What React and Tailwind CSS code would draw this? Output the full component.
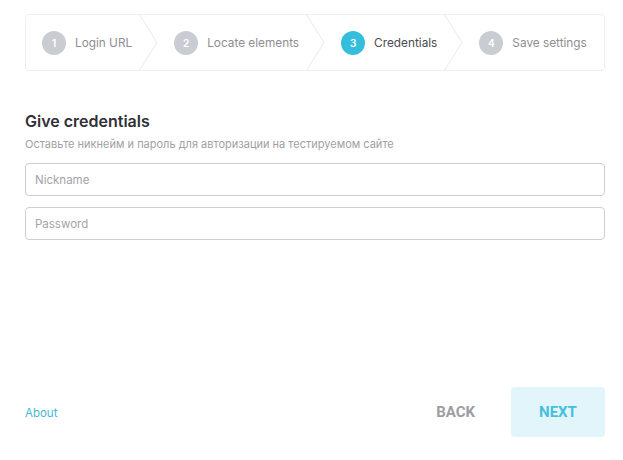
import React, { useState } from "react";

const steps = [
  { n: 1, label: "Login URL" },
  { n: 2, label: "Locate elements" },
  { n: 3, label: "Credentials", active: true },
  { n: 4, label: "Save settings", last: true },
];

const Chevron = () => (
  <svg width="19" height="57" viewBox="0 0 19 57" className="shrink-0 ml-[7px]">
    <polyline points="0,0 18,28.5 0,57" fill="none" stroke="#e9e9ec" strokeWidth="1" />
  </svg>
);

const App = () => {
  const [creds, setCreds] = useState({ nickname: "", password: "" });

  return (
    <div
      className="h-[460px] w-full flex flex-col bg-white pl-[25px] pr-[18px]"
      style={{ fontFamily: "Inter, 'Noto Sans', sans-serif" }}
    >
      {/* Stepper */}
      <div className="mt-[14px] h-[57px] flex items-center border border-[#efeff1] rounded-[4px] overflow-hidden">
        {steps.map((s) => (
          <div key={s.n} className="flex items-center h-full pl-[16px]">
            <span
              className={
                "mt-[1px] w-[24px] h-[24px] rounded-full flex items-center justify-center text-[10px] font-semibold text-white " +
                (s.active ? "bg-[#35bedc]" : "bg-[#c9ccd2]")
              }
            >
              {s.n}
            </span>
            <span
              className={
                "mt-[2px] ml-[9px] text-[11.8px] whitespace-nowrap " +
                (s.active ? "text-[#4a4a4f]" : "text-[#8e8e93]")
              }
            >
              {s.label}
            </span>
            {!s.last && <Chevron />}
          </div>
        ))}
      </div>

      {/* Form */}
      <h2 className="mt-[40px] text-[16px] leading-[20px] font-semibold text-[#303036]">
        Give credentials
      </h2>
      <p className="mt-[5px] text-[11px] leading-[16px] text-[#a0a0a6]">
        Оставьте никнейм и пароль для авторизации на тестируемом сайте
      </p>
      <input
        type="text"
        placeholder="Nickname"
        value={creds.nickname}
        onChange={(e) => setCreds({ ...creds, nickname: e.target.value })}
        className="mt-[11px] h-[33px] w-full border border-[#cfcfd3] rounded-[4px] px-[9px] text-[11.5px] text-[#333] placeholder:text-[#a3a3a8] focus:outline-none"
      />
      <input
        type="password"
        placeholder="Password"
        value={creds.password}
        onChange={(e) => setCreds({ ...creds, password: e.target.value })}
        className="mt-[11px] h-[33px] w-full border border-[#cfcfd3] rounded-[4px] px-[9px] text-[11.5px] text-[#333] placeholder:text-[#a3a3a8] focus:outline-none"
      />

      {/* Footer */}
      <div className="mt-auto mb-[23px] flex items-center">
        <a href="#" className="mt-[4px] text-[11.5px] text-[#45b8d3]">
          About
        </a>
        <button
          className="ml-auto mr-[36px] text-[15px] font-bold text-[#9d9da3]"
          style={{ fontFamily: "Roboto, sans-serif" }}
        >
          BACK
        </button>
        <button
          className="w-[94px] h-[50px] rounded-[4px] bg-[#e2f5fa] text-[15px] font-bold text-[#45c0dc]"
          style={{ fontFamily: "Roboto, sans-serif" }}
        >
          NEXT
        </button>
      </div>
    </div>
  );
};

export default App;
